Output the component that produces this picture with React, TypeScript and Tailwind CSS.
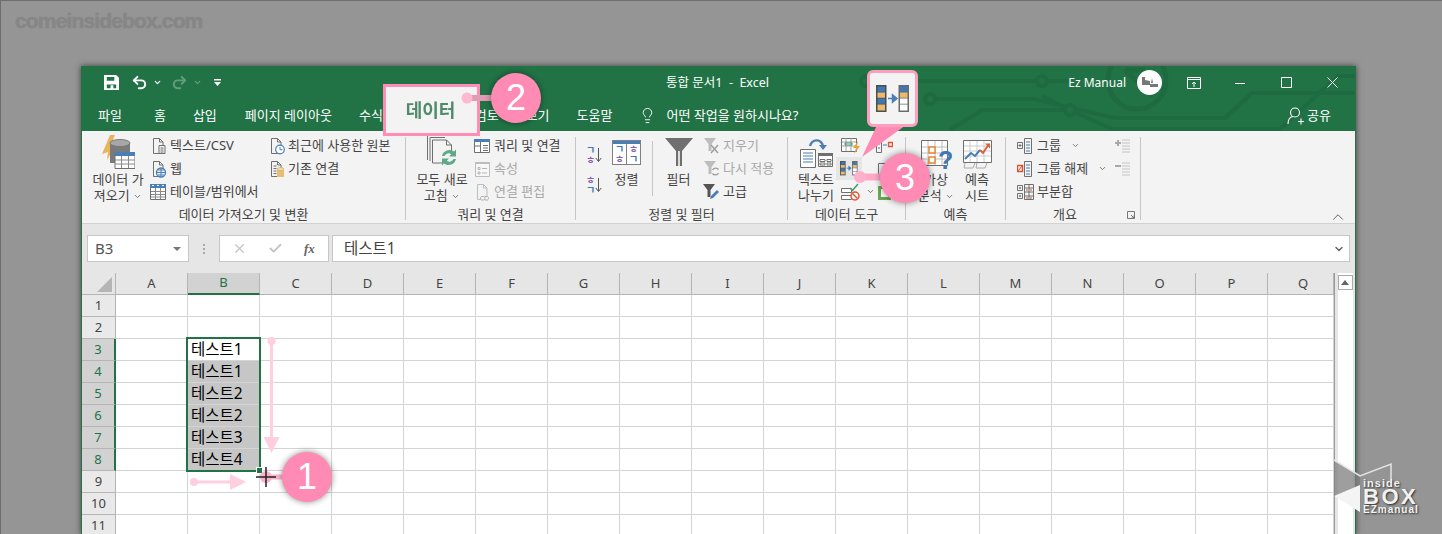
// App.tsx
import { ChevronDown, Lightbulb, Redo2, Undo2, X, Check } from "lucide-react";
import type { ReactNode } from "react";

const FONT = "[font-family:'Noto_Sans','Noto_Sans_CJK_KR',sans-serif]";
const COLUMNS = ["A", "B", "C", "D", "E", "F", "G", "H", "I", "J", "K", "L", "M", "N", "O", "P", "Q"];
const CELLS: Record<number, string> = { 3: "테스트1", 4: "테스트1", 5: "테스트2", 6: "테스트2", 7: "테스트3", 8: "테스트4" };
const GRAY = "#6f6f6f";
const BLUE = "#4a7fb5";

function Ico({ w = 17, h = 18, children }: { w?: number; h?: number; children: ReactNode }) {
  return (
    <svg width={w} height={h} viewBox={`0 0 ${w} ${h}`} fill="none" className="shrink-0">
      {children}
    </svg>
  );
}

const Chev = ({ className = "" }: { className?: string }) => (
  <ChevronDown size={9} strokeWidth={2} className={`inline-block text-[#555] ${className}`} />
);

/* 페이지 모양 외곽선 */
const Page = ({ c = GRAY }: { c?: string }) => (
  <path d="M3.5 1.5h6l3.5 3.5v11.500h-9.500z M9.500 1.500v3.500h3.500" stroke={c} />
);

const TextCsvIcon = () => (
  <Ico>
    <Page />
    <path d="M9 8.500h6v8h-6z" fill="#f3f3f3" stroke={GRAY} />
    <path d="M10.500 11h3M10.500 13h3M10.500 15h3" stroke={GRAY} />
  </Ico>
);
const WebIcon = () => (
  <Ico>
    <Page />
    <circle cx="11" cy="12.500" r="4.500" fill="#f3f3f3" stroke={BLUE} strokeWidth="1.300" />
    <path d="M6.500 12.500h9M8 10h6M8 15h6M11 8v9" stroke={BLUE} />
  </Ico>
);
const TableIcon = () => (
  <Ico h={16}>
    <path d="M.5 3.500h15v12h-15z" fill="#fff" stroke={GRAY} />
    <path d="M0 0h16v4h-16z" fill={BLUE} />
    <path d="M2 1.500h2M7 1.500h2M12 1.500h2" stroke="#fff" />
    <path d="M5.500 4v11M10.500 4v11M1 7.500h14M1 10.500h14M1 13h14" stroke="#8a8a8a" />
  </Ico>
);
const RecentIcon = () => (
  <Ico>
    <Page />
    <circle cx="12" cy="12.500" r="4.300" fill="#fff" stroke={BLUE} strokeWidth="1.200" />
    <path d="M12 10v2.700h2.500" stroke={BLUE} />
  </Ico>
);
const ExistingIcon = () => (
  <Ico>
    <Page />
    <path d="M5.500 6h3M5.500 8.500h3M5.500 11h3M5.500 13.500h3" stroke={GRAY} />
    <path d="M9 9h7v8h-7z" fill="#e6bd77" />
    <ellipse cx="12.500" cy="9" rx="3.500" ry="1.500" fill="#f2d9a8" stroke="#d5a658" strokeWidth=".6" />
  </Ico>
);
const QueryIcon = () => (
  <Ico h={16}>
    <path d="M.5 1.500h15v13h-15z" fill="#fff" stroke={GRAY} />
    <path d="M0 1h16v3h-16z" fill={BLUE} />
    <path d="M6.500 4v10M1 8h5M9 7.500h5M9 10h5M9 12.500h5" stroke={GRAY} />
  </Ico>
);
const PropsIcon = () => (
  <Ico h={16}>
    <path d="M1.500 1.500h14v14h-14z" fill="#f8f8f8" stroke="#bdbdbd" />
    <path d="M1 1h15v2h-15z" fill="#bdbdbd" />
    <path d="M4 6.500h2v2h-2zM4 11h2v2h-2zM8 7.500h5M8 12h5" stroke="#b5b5b5" />
  </Ico>
);
const LinkEditIcon = () => (
  <Ico>
    <Page c="#bdbdbd" />
    <path d="M7.500 13.500h2.500a2 2 0 0 1 0 3.500h-2.500a2 2 0 0 1 0-3.500zM11 13.500h2.500a2 2 0 0 1 0 3.500h-2.500" stroke="#b0b0b0" fill="#f3f3f3" />
  </Ico>
);
const SortSmall = ({ top, bottom }: { top: string; bottom: string }) => (
  <div className="flex items-center">
    <div className="flex flex-col items-center text-[10px] font-bold leading-[10px]">
      <span className={top === "ㄱ" ? "text-[#3f79b5]" : "text-[#8a5fb0]"}>{top}</span>
      <span className={top === "ㄱ" ? "text-[#8a5fb0]" : "text-[#3f79b5]"}>{bottom}</span>
    </div>
    <svg width="7" height="16" viewBox="0 0 7 16" fill="none">
      <path d="M3.500 1v13M.8 11l2.700 3.500L6.200 11" stroke="#555" />
    </svg>
  </div>
);
const Funnel = ({ c = GRAY, w = 17 }: { c?: string; w?: number }) => (
  <svg width={w} height={w} viewBox="0 0 28 28" fill="none" className="shrink-0">
    <path d="M0 0h28L17 13v15h-6V13z" fill={c} />
    <path d="M14 13v15" stroke="#fff" strokeWidth="1.500" />
  </svg>
);
const ClearIcon = () => (
  <Ico>
    <path d="M1 1h12l-4.500 6v7h-3v-7z" fill="#bdbdbd" />
    <path d="M8 8l7 8M15 8l-7 8" stroke="#9a9a9a" strokeWidth="1.400" />
  </Ico>
);
const ReapplyIcon = () => (
  <Ico>
    <path d="M1 1h12l-4.500 6v7h-3v-7z" fill="#bdbdbd" />
    <path d="M9.500 10a3.500 3.500 0 0 1 6-.5M15.500 13a3.500 3.500 0 0 1-6 .5" stroke="#9a9a9a" strokeWidth="1.300" />
  </Ico>
);
const AdvancedIcon = () => (
  <Ico>
    <path d="M0 1h12l-4.500 6v7h-3v-7z" fill="#555" />
    <path d="M7 16l1-3 6-6 2 2-6 6z" fill={BLUE} />
  </Ico>
);
const MergeIcon = ({ s = 1 }: { s?: number }) => (
  <svg width={22 * s} height={18 * s} viewBox="0 0 22 18" fill="none" className="shrink-0">
    <path d="M0 0h7v18h-7z" fill="#4d4d4d" />
    <path d="M1 1h5v3.500h-5zM1 9h5v3.500h-5z" fill="#3f79b5" />
    <path d="M1 5h5v3.500h-5zM1 13h5v4h-5z" fill="#e8b96e" />
    <path d="M15 0h7v18h-7z" fill="#6a6a6a" />
    <path d="M16 1h5v3.500h-5z" fill="#3f79b5" />
    <path d="M16 5h5v3.500h-5z" fill="#e8b96e" />
    <path d="M16 9h5v3.500h-5zM16 13h5v4h-5z" fill="#fff" />
    <path d="M8 9h4.500M11 6.500L14 9l-3 2.500z" stroke={BLUE} fill={BLUE} />
  </svg>
);
const FlashIcon = () => (
  <Ico w={20}>
    <path d="M.5 1.500h15v13h-15z" fill="#fff" stroke={GRAY} />
    <path d="M1 5h14M1 9h14M5 1v13M10 1v13" stroke="#a0a0a0" />
    <path d="M4 6h7v2h-7z" fill="none" stroke="#3f9a6d" />
    <path d="M17 4l-5 7h3l-2 6 6-8h-3z" fill="#e8a33d" />
  </Ico>
);
const ValidIcon = () => (
  <Ico w={20}>
    <path d="M.5 5.500h10v4h-10zM.5 12.500h10v4h-10z" fill="#fff" stroke={GRAY} />
    <path d="M9 5l2.500 2.500L17 1" stroke="#3f9a6d" strokeWidth="1.500" />
    <circle cx="14" cy="13" r="4" fill="#fff" stroke="#e0522f" strokeWidth="1.500" />
    <path d="M11.500 10.500l5 5" stroke="#e0522f" strokeWidth="1.500" />
  </Ico>
);
const TextSplitIcon = () => (
  <svg width="33" height="30" viewBox="0 0 33 30" fill="none">
    <path d="M10 8c2-7 11-8 13 0" stroke={BLUE} strokeWidth="2.400" />
    <path d="M19 7h8l-4 5z" fill={BLUE} />
    <path d="M.5 11.500h15v18h-15z" fill="#fff" stroke={GRAY} />
    <path d="M3 15h10M3 18h10M3 21h10M3 24h10" stroke={BLUE} />
    <path d="M18.500 15.500h14v13h-14z" fill="#fff" stroke={GRAY} />
    <path d="M18 15h15v3h-15z" fill={GRAY} />
    <path d="M20 21.500h5v2h-5zM27 21.500h4v2h-4zM20 25h5v2h-5zM27 25h4v2h-4z" stroke={GRAY} />
  </svg>
);
const WhatIfIcon = () => (
  <svg width="31" height="32" viewBox="0 0 31 32" fill="none">
    <path d="M.5 .5h26v25h-26z" fill="#fff" stroke={GRAY} />
    <path d="M7 1v24M14 1v24M21 1v24M1 7h25M1 13h25M1 19h25" stroke="#bbb" />
    <path d="M8 7h6v6h-6zM8 17h6v6h-6z" fill="#fff" stroke="#e8872f" strokeWidth="1.500" />
    <text x="17" y="29" fontFamily="Liberation Sans" fontWeight="700" fontSize="25" fill="#3f79b5">?</text>
  </svg>
);
const ForecastIcon = () => (
  <svg width="29" height="30" viewBox="0 0 29 30" fill="none">
    <path d="M.5 .5h28v22h-28z" fill="#fff" stroke={GRAY} />
    <path d="M7 1v21M14 1v21M21 1v21M1 6h27M1 11h27M1 16h27" stroke="#ccc" />
    <path d="M2 19l6-6 4 3 5-6" stroke={BLUE} strokeWidth="2" />
    <path d="M17 10l3 3 6-9" stroke="#d9643a" strokeWidth="2" />
    <path d="M22 3.500h5v5z" fill="#d9643a" />
    <path d="M2 23l-1 5h9l2-5M14 23l-1 5h9l2-5" stroke="#aaa" />
  </svg>
);
const DataImportIcon = () => (
  <svg width="33" height="34" viewBox="0 0 33 34" fill="none">
    <path d="M8 0L0 19l6-2-1 8 9-15-6 2 5-12z" fill="#e9b45e" />
    <path d="M8 8v20h20V8z" fill="#7a7a7a" />
    <ellipse cx="18" cy="8" rx="10" ry="3.500" fill="#a8a8a8" stroke="#7a7a7a" />
    <path d="M13 17.500h20v16h-20z" fill="#fff" stroke={GRAY} />
    <path d="M13 17h20v4h-20z" fill={BLUE} />
    <path d="M19.500 21v12M26.500 21v12M13 25h20M13 29h20" stroke="#8a8a8a" />
  </svg>
);
const RefreshAllIcon = () => (
  <svg width="30" height="32" viewBox="0 0 30 32" fill="none">
    <path d="M.5 25V.5h15M3 26V2.500h15M5.500 28V5h14l5 5v8" stroke={GRAY} />
    <path d="M5.500 28h10" stroke={GRAY} />
    <path d="M19.500 5v5h5" stroke={GRAY} />
    <path d="M15 21a7.500 7.500 0 0 1 12-4.500l2-2v7h-7l2.200-2.300a4.500 4.500 0 0 0-6.700 1.800zM29 24a7.500 7.500 0 0 1-12 4.500l-2 2v-7h7l-2.200 2.300a4.500 4.500 0 0 0 6.700-1.800z" fill="#5fa98a" />
  </svg>
);
const SortLarge = () => (
  <div className="flex h-[25px] w-[29px] flex-col border border-[#808080] bg-white">
    <div className="h-[3px] bg-[#4a7fb5]" />
    <div className="flex flex-1 text-[10px] font-bold leading-[10px]">
      <div className="flex flex-1 flex-col items-center justify-center border-r border-[#808080]">
        <span className="text-[#3f79b5]">ㄱ</span>
        <span className="text-[#8a5fb0]">ㅎ</span>
      </div>
      <div className="flex flex-1 flex-col items-center justify-center">
        <span className="text-[#8a5fb0]">ㅎ</span>
        <span className="text-[#3f79b5]">ㄱ</span>
      </div>
    </div>
  </div>
);
const OutlineIcon = ({ kind }: { kind: "group" | "ungroup" | "subtotal" }) => (
  <Ico w={17} h={16}>
    {kind === "subtotal" ? (
      <>
        <path d="M.5 1.500h5v5h-5zM.5 9.500h5v5h-5z" stroke={GRAY} />
        <path d="M2 4h2M3 3v2M2 12h2M3 11v2" stroke={GRAY} />
        <path d="M7.500 .5h9v15h-9z" stroke={GRAY} />
        <path d="M8 4h8M8 8h8M8 12h8M12 1v14" stroke={GRAY} />
        <path d="M9 6h2M13 6h2M9 14h2M13 14h2" stroke="#e0522f" />
      </>
    ) : (
      <>
        <path
          d="M.5 4.500h5v6h-5z"
          stroke={kind === "ungroup" ? "#e0522f" : GRAY}
          strokeWidth={kind === "ungroup" ? 1.500 : 1}
        />
        {kind === "group" ? (
          <path d="M1.500 7.500h3M3 6v3" stroke={GRAY} />
        ) : (
          <path d="M1 10L5 5" stroke="#e0522f" />
        )}
        <path d="M7.500 .5h7v15h-7z" stroke={GRAY} />
        <path d="M9 4h4M9 7h4M9 10h4M9 13h4" stroke={BLUE} />
      </>
    )}
  </Ico>
);
const OutlineSide = ({ plus }: { plus?: boolean }) => (
  <Ico w={15} h={14}>
    <path d="M0 4h6" stroke="#a8a8a8" strokeWidth="2" />
    {plus && <path d="M3 1v6" stroke="#a8a8a8" strokeWidth="2" />}
    <path d="M7 1h8M7 4h8M7 7h8M7 10h8M7 13h8" stroke="#c4c4c4" />
  </Ico>
);

function Small({ icon, label, muted, chev, chevClass = "ml-[2px]" }: { icon: ReactNode; label?: string; muted?: boolean; chev?: boolean; chevClass?: string }) {
  return (
    <div className="flex h-[23px] items-center gap-[3px] whitespace-nowrap">
      {icon}
      {label && <span className={muted ? "text-[#a8a8a8]" : ""}>{label}</span>}
      {chev && <Chev className={chevClass} />}
    </div>
  );
}

function Large({ icon, lines, width, className = "" }: { icon: ReactNode; lines: ReactNode[]; width: string; className?: string }) {
  return (
    <div className={`flex flex-col items-center pt-[4px] ${width} ${className}`}>
      <div className="flex h-[36px] items-start justify-center">{icon}</div>
      {lines.map((l, i) => (
        <div key={i} className="whitespace-nowrap leading-[16px]">
          {l}
        </div>
      ))}
    </div>
  );
}

function Group({ label, width, children, labelClass = "" }: { label: string; width: string; children: ReactNode; labelClass?: string }) {
  return (
    <div className={`flex shrink-0 flex-col ${width}`}>
      <div className="flex h-[75px]">{children}</div>
      <div className={`text-center leading-[17px] ${labelClass}`}>{label}</div>
    </div>
  );
}

const Sep = () => <div className="mt-[6px] h-[83px] w-px shrink-0 bg-[#c6c6c6]" />;
const Col = ({ children, className = "" }: { children: ReactNode; className?: string }) => (
  <div className={`flex flex-col pt-[3px] ${className}`}>{children}</div>
);

function Ribbon() {
  return (
    <div className="flex h-[93px] border-b border-[#d2d2d2] bg-[#f3f3f3] text-[13px] text-[#444]">
      <Group label="데이터 가져오기 및 변환" width="w-[323px]">
        <Large
          icon={<DataImportIcon />}
          lines={["데이터 가", <>져오기 <Chev /></>]}
          width="w-[62px]"
          className="ml-[5px]"
        />
        <Col className="ml-[1px] w-[118px]">
          <Small icon={<TextCsvIcon />} label="텍스트/CSV" />
          <Small icon={<WebIcon />} label="웹" />
          <Small icon={<TableIcon />} label="테이블/범위에서" />
        </Col>
        <Col>
          <Small icon={<RecentIcon />} label="최근에 사용한 원본" />
          <Small icon={<ExistingIcon />} label="기존 연결" />
        </Col>
      </Group>
      <Sep />
      <Group label="쿼리 및 연결" width="w-[169px]">
        <Large
          icon={<RefreshAllIcon />}
          lines={["모두 새로", <>고침 <Chev /></>]}
          width="w-[62px]"
          className="ml-[5px]"
        />
        <Col className="ml-[1px]">
          <Small icon={<QueryIcon />} label="쿼리 및 연결" />
          <Small icon={<PropsIcon />} label="속성" muted />
          <Small icon={<LinkEditIcon />} label="연결 편집" muted />
        </Col>
      </Group>
      <Sep />
      <Group label="정렬 및 필터" width="w-[211px]">
        <div className="ml-[10px] flex w-[26px] flex-col gap-[10px] pt-[14px]">
          <SortSmall top="ㄱ" bottom="ㅎ" />
          <SortSmall top="ㅎ" bottom="ㄱ" />
        </div>
        <Large icon={<div className="pt-[5px]"><SortLarge /></div>} lines={["정렬"]} width="w-[29px]" />
        <div className="mx-[11px] mt-[10px] h-[55px] w-px bg-[#c6c6c6]" />
        <Large icon={<div className="pt-[3px]"><Funnel w={28} /></div>} lines={["필터"]} width="w-[29px]" />
        <Col className="ml-[10px]">
          <Small icon={<ClearIcon />} label="지우기" muted />
          <Small icon={<ReapplyIcon />} label="다시 적용" muted />
          <Small icon={<AdvancedIcon />} label="고급" />
        </Col>
      </Group>
      <Sep />
      <Group label="데이터 도구" width="w-[117px]">
        <Large icon={<div className="pt-[3px]"><TextSplitIcon /></div>} lines={["텍스트", "나누기"]} width="w-[40px]" className="ml-[8px]" />
        <Col className="w-[40px]">
          <div className="pl-[5px]"><Small icon={<FlashIcon />} /></div>
          <div className="flex h-[23px] w-[26px] items-center justify-center bg-[#e6e6e6]">
            <MergeIcon s={0.8} />
          </div>
          <div className="pl-[5px]"><Small icon={<ValidIcon />} chev /></div>
        </Col>
        <Col>
          <Small icon={<Ico><path d="M.5 3.500h5v12h-5zM2 7h2M2 11h2" stroke={GRAY} /><path d="M7 8h4" stroke={BLUE} /><path d="M12.500 5.500h4v4h-4z" stroke="#e0522f" strokeWidth="1.300" /></Ico>} />
          <Small icon={<Ico><path d="M2.500 3.500h12v12h-12z" stroke={GRAY} /></Ico>} />
          <Small icon={<Ico><path d="M2 3h13v14h-13z" fill="#6aa84f" /><path d="M5 6h7v8h-7z" fill="#fff" /></Ico>} />
        </Col>
      </Group>
      <Sep />
      <Group label="예측" width="w-[99px]">
        <Large icon={<div className="pt-[5px]"><WhatIfIcon /></div>} lines={["가상", <>분석 <Chev /></>]} width="w-[44px]" className="ml-[8px]" />
        <Large icon={<div className="pt-[5px]"><ForecastIcon /></div>} lines={["예측", "시트"]} width="w-[36px]" className="ml-[1px]" />
      </Group>
      <Sep />
      <div className="relative w-[134px] shrink-0">
        <Group label="개요" width="w-[134px]" labelClass="pr-[16px]">
          <Col className="ml-[11px] w-[98px]">
            <Small icon={<OutlineIcon kind="group" />} label="그룹" chev chevClass="ml-[7px]" />
            <Small icon={<OutlineIcon kind="ungroup" />} label="그룹 해제" chev chevClass="ml-[7px]" />
            <Small icon={<OutlineIcon kind="subtotal" />} label="부분합" />
          </Col>
          <Col>
            <div className="flex h-[23px] items-center"><OutlineSide plus /></div>
            <div className="flex h-[23px] items-center"><OutlineSide /></div>
          </Col>
        </Group>
        <svg width="8" height="8" viewBox="0 0 8 8" fill="none" className="absolute bottom-[4px] right-[5px]">
          <path d="M.5.5h7v7h-7z M4 4l3 3M7 4.500V7H4.500" stroke="#777" />
        </svg>
      </div>
      <Sep />
      <div className="flex flex-1 items-end justify-end pr-[8px]">
        <ChevronDown size={18} strokeWidth={1.200} className="-mb-[3px] rotate-180 text-[#555]" />
      </div>
    </div>
  );
}

function TitleBar() {
  return (
    <div className="relative h-[65px] overflow-hidden bg-[#217346] text-[13px] text-white">
      {/* 회로 무늬 배경 */}
      <svg width="1274" height="65" viewBox="82 66 1274 65" fill="none" stroke="#1e6a41" strokeWidth="4" className="absolute left-0 top-0">
        <path d="M866 81h205M950 130L982 110h88L1112 129H1280L1338 76h18" />
        <path d="M930 99h103L1115 118h110l27-25h104M1070 110l-28-14" />
        <circle cx="1137" cy="80" r="29" strokeWidth="5" />
        <path d="M1125 70l28 26M1125 70h20" strokeWidth="5" />
        <circle cx="1042" cy="81" r="5" fill="#217346" />
        <circle cx="1070" cy="110" r="5" fill="#217346" />
        <circle cx="930" cy="99" r="5" fill="#217346" />
        <circle cx="866" cy="81" r="5" fill="#217346" />
      </svg>
      <div className="relative grid h-[33px] grid-cols-[1fr_auto_1fr] items-center">
        <div className="flex items-center pl-[22px]">
          <svg width="15" height="15" viewBox="0 0 16 16">
            <path d="M0 0h13l3 3v13H0z" fill="#fff" />
            <path d="M3 2h8v4H3zM3 10h10v4h-3v-3H7v3H3z" fill="#217346" />
          </svg>
          <Undo2 size={17} strokeWidth={2.800} className="ml-[12px]" />
          <ChevronDown size={9} strokeWidth={3} className="ml-[5px]" />
          <Redo2 size={17} strokeWidth={2.800} className="ml-[9px] opacity-30" />
          <ChevronDown size={9} strokeWidth={3} className="ml-[5px] opacity-30" />
          <svg width="7" height="7" viewBox="0 0 7 7" className="ml-[12px]">
            <path d="M0 0h7v1.500h-7zM0 3h7L3.500 7z" fill="#fff" />
          </svg>
        </div>
        <div className="pr-[2px] pt-[1px] text-[12.5px]">통합 문서1&nbsp;&nbsp;-&nbsp;&nbsp;Excel</div>
        <div className="flex items-center justify-end">
          <span className="text-[12px]">Ez Manual</span>
          <div className="ml-[11px] flex h-[25px] w-[25px] items-center justify-center rounded-full bg-white">
            <svg width="16" height="11" viewBox="0 0 16 11">
              <path d="M0 0h3v8h-3zM3 3l5 1v4h-5zM8 7h8v3h-8zM10 1l1 5h-2z" fill="#777" />
            </svg>
          </div>
          <div className="ml-[9px] flex items-center">
            <div className="flex w-[46px] justify-center">
              <svg width="14" height="12" viewBox="0 0 14 12" fill="none" stroke="#fff">
                <path d="M.5 .5h13v11h-13zM0 2.500h14M7 10V5M5 7l2-2 2 2" />
              </svg>
            </div>
            <div className="flex w-[46px] justify-center">
              <svg width="10" height="10" viewBox="0 0 10 10" fill="none" stroke="#fff"><path d="M0 5.500h10" /></svg>
            </div>
            <div className="flex w-[46px] justify-center">
              <svg width="11" height="11" viewBox="0 0 11 11" fill="none" stroke="#fff"><path d="M.5 .5h10v10h-10z" /></svg>
            </div>
            <div className="flex w-[46px] justify-center">
              <svg width="11" height="11" viewBox="0 0 11 11" fill="none" stroke="#fff"><path d="M.5 .5l10 10M10.500 .5l-10 10" /></svg>
            </div>
          </div>
        </div>
      </div>
      <div className="relative flex h-[32px] items-center pl-[16px] pt-[1px]">
        <span>파일</span>
        <span className="ml-[32px]">홈</span>
        <span className="ml-[27px]">삽입</span>
        <span className="ml-[28px]">페이지 레이아웃</span>
        <span className="ml-[27px]">수식</span>
        <span className="ml-[28px]">데이터</span>
        <span className="ml-[28px]">검토</span>
        <span className="ml-[27px]">보기</span>
        <span className="ml-[27px]">도움말</span>
        <Lightbulb size={17} strokeWidth={1.300} className="ml-[27px]" />
        <span className="ml-[10px]">어떤 작업을 원하시나요?</span>
        <div className="ml-auto flex items-center gap-[3px] pr-[24px]">
          <svg width="17" height="18" viewBox="0 0 17 18" fill="none" stroke="#fff" strokeWidth="1.100">
            <circle cx="8" cy="5.500" r="4.500" />
            <path d="M1 17c0-4 2-7 5-7.500M11 14.500h6M14 11.500v6" />
          </svg>
          <span>공유</span>
        </div>
      </div>
    </div>
  );
}

function FormulaBar() {
  return (
    <div className="flex h-[49px] items-start gap-[3px] bg-[#e6e6e6] pl-[5px] pr-[5px] pt-[11px]">
      <div className="flex h-[27px] w-[102px] items-center justify-between border border-[#c6c6c6] bg-white pl-[7px] pr-[7px] text-[15px] text-[#555]">
        <span>B3</span>
        <span className="h-0 w-0 border-x-[4px] border-t-[4px] border-x-transparent border-t-[#777]" />
      </div>
      <div className="flex w-[24px] flex-col items-center gap-[2px] pt-[9px]">
        <i className="h-[2px] w-[2px] bg-[#aaa]" />
        <i className="h-[2px] w-[2px] bg-[#aaa]" />
        <i className="h-[2px] w-[2px] bg-[#aaa]" />
      </div>
      <div className="flex h-[27px] w-[110px] items-center border border-[#c6c6c6] bg-white pl-[12px]">
        <X size={15} strokeWidth={2} className="text-[#c4c4c4]" />
        <Check size={15} strokeWidth={3} className="ml-[21px] text-[#c4c4c4]" />
        <span className="ml-[21px] text-[13px] font-bold italic text-[#666] [font-family:'Liberation_Serif',serif]">fx</span>
      </div>
      <div className="flex h-[27px] flex-1 items-center justify-between border border-[#c6c6c6] bg-white pl-[11px] pr-[4px] text-[15.5px] text-[#444]">
        <span>테스트1</span>
        <ChevronDown size={12} strokeWidth={3} className="text-[#666]" />
      </div>
    </div>
  );
}

function Sheet() {
  const rows = Array.from({ length: 11 }, (_, i) => i + 1);
  const isSelRow = (r: number) => r >= 3 && r <= 8;
  return (
    <div className="flex bg-white">
      <div className="grid shrink-0 grid-cols-[34px_repeat(16,72px)_66px] auto-rows-[22px] border-r border-[#9a9a9a] text-[13px] text-[#444]">
        <div className="relative border-b border-r border-[#b5b5b5] bg-[#e6e6e6]">
          <i className="absolute bottom-[2px] right-[3px] h-0 w-0 border-b-[15px] border-l-[15px] border-b-[#b5b5b5] border-l-transparent" />
        </div>
        {COLUMNS.map((c) => (
          <div
            key={c}
            className={
              c === "B"
                ? "flex items-center justify-center border-b-2 border-r border-b-[#217346] border-r-[#b5b5b5] bg-[#d2d2d2] text-[#217346]"
                : c === "Q"
                ? "flex items-center justify-center border-b border-r border-[#b5b5b5] bg-[#e6e6e6] pl-[5px]"
                : "flex items-center justify-center border-b border-r border-[#b5b5b5] bg-[#e6e6e6]"
            }
          >
            {c}
          </div>
        ))}
        {rows.map((r) => (
          <div key={r} className="contents">
            <div
              className={
                isSelRow(r)
                  ? "flex items-center justify-center border-b border-r-2 border-b-[#b5b5b5] border-r-[#217346] bg-[#d2d2d2] text-[#217346]"
                  : "flex items-center justify-center border-b border-r border-[#b5b5b5] bg-[#e9e9e9]"
              }
            >
              {r}
            </div>
            {COLUMNS.map((c) => (
              <div
                key={c}
                className={
                  c === "B" && r >= 4 && r <= 8
                    ? "flex items-center border-b border-r border-[#d4d4d4] bg-[#c6c6c6] pl-[3px] text-[15.5px] leading-none text-black"
                    : "flex items-center border-b border-r border-[#d4d4d4] pl-[3px] text-[15.5px] leading-none text-black"
                }
              >
                {c === "B" ? CELLS[r] : ""}
              </div>
            ))}
          </div>
        ))}
      </div>
      {/* 세로 스크롤바 */}
      <div className="flex w-[20px] justify-center bg-[#e6e6e6]">
        <div className="flex h-[300px] w-[15px] flex-col bg-white">
          <div className="mt-[2px] flex h-[15px] items-center justify-center border border-[#aaa]">
            <i className="h-0 w-0 border-x-[4px] border-b-[5px] border-x-transparent border-b-[#666]" />
          </div>
        </div>
      </div>
    </div>
  );
}

const Badge = ({ n, className }: { n: string; className: string }) => (
  <div
    className={`absolute flex h-[50px] w-[50px] items-center justify-center rounded-full bg-[#ff8ab4] text-[36px] text-white shadow-[0_0_6px_rgba(0,0,0,.45)] [font-family:'Liberation_Sans',sans-serif] ${className}`}
  >
    {n}
  </div>
);

function Overlays() {
  return (
    <>
      {/* 선택 영역 */}
      <div className="absolute left-[186px] top-[337px] h-[135px] w-[75px] border-2 border-[#217346]" />
      <div className="absolute left-[256px] top-[467px] h-[7px] w-[7px] border border-white bg-[#217346]" />
      {/* 탭 확대 */}
      <div className={`absolute left-[383px] top-[84px] flex h-[52px] w-[97px] items-center justify-center border-[3px] border-[#ff8db5] bg-[#f3f3f3] text-[18px] font-bold text-[#4f8a6b] ${FONT}`}>
        <span className="pr-[2px] blur-[0.4px]">데이터</span>
      </div>
      {/* 핑크 화살표 */}
      <svg width="1442" height="534" viewBox="0 0 1442 534" fill="none" className="pointer-events-none absolute left-0 top-0">
        <circle cx="271.500" cy="341" r="4" fill="#ffcfdf" />
        <path d="M271.500 341v97" stroke="#ffcfdf" strokeWidth="3" />
        <path d="M263.500 437h16l-8 16z" fill="#ffcfdf" />
        <circle cx="194" cy="482" r="4" fill="#ffcfdf" />
        <path d="M194 482h38" stroke="#ffcfdf" strokeWidth="3" />
        <path d="M230 474v16l16-8z" fill="#ffcfdf" />
        <path d="M266 477h30" stroke="#ff9fc0" strokeWidth="5" opacity=".8" />
        <circle cx="266" cy="477" r="6" fill="#ffb0cb" />
        <path d="M256 477h20M266 467v20" stroke="#222" strokeWidth="1.500" />
        <path d="M862 157L877 125h29z" fill="#ff8ab4" />
        <path d="M860 177h30" stroke="#ffa9c6" strokeWidth="7" />
        <circle cx="860" cy="177" r="6" fill="#ffb0cb" />
        <path d="M467 98h30" stroke="#e29bb4" strokeWidth="6" />
        <circle cx="467" cy="98" r="5.500" fill="#ffb9d0" />
      </svg>
      <Badge n="2" className="left-[491px] top-[73px]" />
      <div className="absolute left-[867px] top-[70px] flex h-[57px] w-[51px] items-center justify-center rounded-[6px] border-[3px] border-[#ff9fc0] bg-[#f3f3f3]">
        <MergeIcon s={1.500} />
      </div>
      <Badge n="3" className="left-[880px] top-[153px]" />
      <Badge n="1" className="left-[282px] top-[452px]" />
      {/* 워터마크 로고 */}
      <svg width="62" height="56" viewBox="0 0 62 56" fill="none" className="absolute left-[1333px] top-[459px]">
        <path d="M1 1L27 17V28L1 38z" fill="#7d7d7d" fillOpacity=".75" />
        <path d="M1 1L27 17L58 5V26" stroke="#e4e4e4" strokeWidth="1.500" />
        <path d="M1 37L27 26V53z" fill="#f4f4f4" />
      </svg>
      <div className="absolute left-[1363px] top-[478px] flex w-[62px] flex-col font-bold text-[#f2f2f2] [font-family:'Liberation_Sans',sans-serif] [text-shadow:1px_1px_2px_rgba(0,0,0,.7)]">
        <span className="text-[11px] leading-[11px] tracking-[1px]">inside</span>
        <span className="text-[22px] leading-[16px] tracking-[2.500px]">BOX</span>
        <span className="text-[10px] leading-[10px] tracking-[1px]">EZmanual</span>
      </div>
    </>
  );
}

export default function App() {
  return (
    <div className={`relative h-[534px] w-[1442px] overflow-hidden bg-[#959595] shadow-[inset_1px_1px_0_#6e6e6e] ${FONT}`}>
      <div className="h-[66px] pl-[15px] pt-[7px] text-[21px] font-bold leading-[28px] tracking-[-0.85px] text-[#868686] [-webkit-text-stroke:0.6px_#868686] [font-family:'Liberation_Sans',sans-serif]">
        comeinsidebox.com
      </div>
      <div className="ml-[81px] h-[468px] w-[1275px] overflow-hidden border-x border-[#217346] shadow-[0_0_6px_rgba(0,0,0,.6)]">
        <TitleBar />
        <Ribbon />
        <FormulaBar />
        <Sheet />
      </div>
      <Overlays />
    </div>
  );
}
